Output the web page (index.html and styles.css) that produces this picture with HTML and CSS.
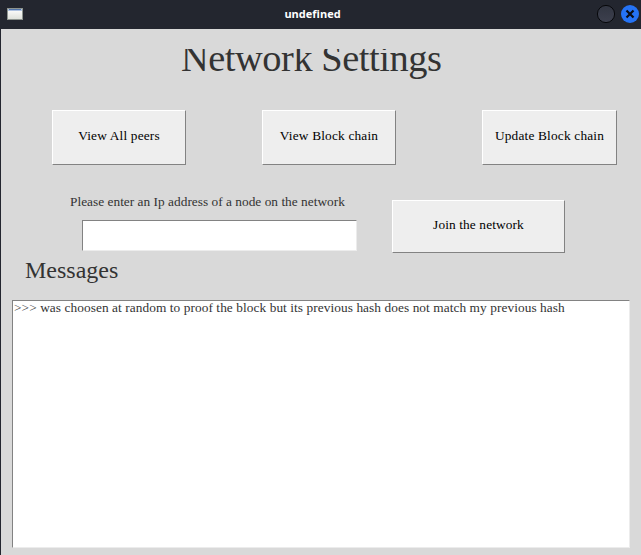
FILE: index.html
```html
<!DOCTYPE html>
<html lang="en">
<head>
<meta charset="utf-8">
<title>undefined</title>
<link rel="stylesheet" href="styles.css">
</head>
<body>
<div class="window">
  <header class="titlebar">
    <svg class="app-icon" width="16" height="12" viewBox="0 0 16 12">
      <defs><linearGradient id="pane" x1="0" y1="0" x2="0" y2="1"><stop offset="0" stop-color="#fff"/><stop offset="1" stop-color="#dfe2dc"/></linearGradient></defs>
      <rect width="16" height="12" fill="#8d948f"/>
      <rect x="1" y="1" width="14" height="10" fill="url(#pane)"/>
      <rect x="1" y="1" width="14" height="2" fill="#b0c4e2"/>
      <rect x="2" y="1" width="12" height="1" fill="#5275ab"/>
    </svg>
    <span class="caption">undefined</span>
    <svg class="controls" width="44" height="20" viewBox="0 0 44 20">
      <defs><linearGradient id="knob" x1="0" y1="0" x2="0" y2="1"><stop offset="0" stop-color="#313541"/><stop offset="1" stop-color="#3d404e"/></linearGradient></defs>
      <circle cx="10" cy="10" r="8.6" fill="url(#knob)" stroke="#07080b"/>
      <circle cx="34" cy="10" r="9" fill="#2573f5"/>
      <path d="M30.5 6.5l7 7M37.5 6.5l-7 7" stroke="#0b0d14" stroke-width="2.2"/>
    </svg>
  </header>
  <main class="content">
    <h1><span>Network Settings</span></h1>
    <div class="actions">
      <button class="view-peers">View All peers</button>
      <button class="view-chain">View Block chain</button>
      <button class="update">Update Block chain</button>
    </div>
    <div class="join-row">
      <div class="field">
        <label for="ip">Please enter an Ip address of a node on the network</label>
        <input id="ip" type="text">
      </div>
      <button class="join">Join the network</button>
    </div>
    <h2>Messages</h2>
    <div class="log">&gt;&gt;&gt; was choosen at random to proof the block but its previous hash does not match my previous hash</div>
  </main>
</div>
</body>
</html>
```

FILE: styles.css
```css
* { box-sizing: border-box; }
body { margin: 0; overflow: hidden; }
.window {
  width: 641px;
  height: 555px;
  display: flex;
  flex-direction: column;
  background: #d9d9d9;
  font-family: "Liberation Serif", serif;
  font-size: 13.33px;
  color: #333;
}
.titlebar {
  height: 29px;
  display: grid;
  grid-template-columns: 44px 1fr 44px;
  align-items: center;
  padding: 0 1px 0 0;
  background: #23262f;
}
.app-icon { margin: -1px 0 0 7px; }
.caption {
  margin-top: -2px;
  padding-right: 15px;
  text-align: center;
  font: bold 11px/27px "Open Sans", "Noto Sans", sans-serif;
  color: #fff;
}
.controls { margin-top: -1px; }
.content {
  flex: 1;
  border-left: 1px solid #23262f;
  padding-top: 20px;
}
h1 {
  height: 40px;
  margin: 0 0 21px 180px;
  overflow: hidden;
  font-weight: normal;
  font-size: 38.4px;
  line-height: 40px;
  letter-spacing: -0.45px;
  white-space: nowrap;
}
h1 span { display: block; margin-top: -11px; }
.actions { display: flex; height: 55px; padding-left: 51px; }
button {
  padding: 0 0 4px;
  border: 1px solid;
  border-color: #fff #828282 #828282 #fff;
  border-radius: 0;
  background: #eee;
  font: inherit;
  letter-spacing: 0.18px;
  color: #000;
  white-space: nowrap;
}
.view-peers, .view-chain { width: 134px; }
.view-chain { margin-left: 76px; }
.update { width: 135px; margin-left: 86px; }
.join-row { display: flex; margin-top: 29px; padding: 0 0 0 69px; }
.field { width: 322px; }
label {
  display: block;
  height: 26px;
  line-height: 16px;
  letter-spacing: 0.02px;
  white-space: nowrap;
}
input {
  display: block;
  width: 275px;
  height: 31px;
  margin-left: 12px;
  border: 1px solid;
  border-color: #828282 #ececec #ececec #828282;
  background: #fff;
}
.join { width: 173px; height: 53px; margin-top: 6px; letter-spacing: 0.12px; }
h2 {
  margin: 0 0 0 24px;
  height: 47px;
  font-weight: normal;
  font-size: 24px;
  line-height: 34px;
}
.log {
  width: 618px;
  height: 248px;
  margin-left: 11px;
  padding: 0 1px;
  border: 1px solid;
  border-color: #828282 #ececec #ececec #828282;
  background: #fff;
  line-height: 13px;
  letter-spacing: 0.072px;
  white-space: nowrap;
}
```
